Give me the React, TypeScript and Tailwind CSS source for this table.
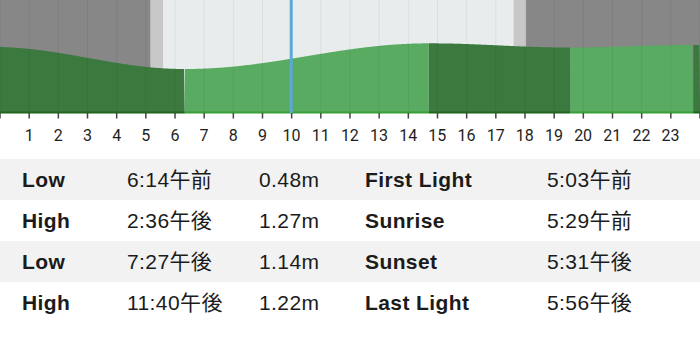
import React from "react";

const PX = 700 / 24;
const OFF = 3;
const BASE = 113;

const extremes: [number, number][] = [
  [-0.4, 1.16],
  [6.233, 0.48],
  [14.6, 1.27],
  [19.45, 1.14],
  [23.667, 1.22],
  [30, 0.5],
];

const xOf = (t: number) => t * PX + OFF;
const yOf = (h: number) => 84.6 - 32.5 * h;

function heightAt(t: number) {
  for (let i = 0; i < extremes.length - 1; i++) {
    const [t0, h0] = extremes[i];
    const [t1, h1] = extremes[i + 1];
    if (t >= t0 && t <= t1) {
      const f = (t - t0) / (t1 - t0);
      const k = (1 - Math.cos(Math.PI * f)) / 2;
      return h0 + (h1 - h0) * k;
    }
  }
  return 1;
}

function areaPath(x0: number, x1: number) {
  const pts: string[] = [];
  for (let x = x0; x <= x1 + 0.001; x += 1) {
    const t = (Math.min(x, x1) - OFF) / PX;
    pts.push(`${Math.min(x, x1).toFixed(2)},${yOf(heightAt(t)).toFixed(2)}`);
  }
  return `M${x0},${BASE} L${pts.join(" L")} L${x1},${BASE} Z`;
}

const DARK = "#3b793f";
const LIGHT = "#5aab62";

const segments: { x0: number; x1: number; c: string; line: string }[] = [
  { x0: 0, x1: xOf(6.233), c: DARK, line: "#1f661f" },
  { x0: xOf(6.233), x1: xOf(14.6), c: LIGHT, line: "#36a036" },
  { x0: xOf(14.6), x1: xOf(19.45), c: DARK, line: "#1f661f" },
  { x0: xOf(19.45), x1: xOf(23.667), c: LIGHT, line: "#36a036" },
  { x0: xOf(23.667), x1: 700, c: DARK, line: "#1f661f" },
];

function Chart() {
  const hours = Array.from({ length: 25 }, (_, i) => i);
  const fl = xOf(5.05);
  const sr = xOf(5.483);
  const ss = xOf(17.517);
  const ll = xOf(17.933);
  return (
    <svg width={700} height={120} viewBox="0 0 700 120" className="block">
      <rect x={0} y={0} width={700} height={BASE} fill="#878787" />
      <rect x={fl} y={0} width={sr - fl} height={BASE} fill="#c8c8c8" />
      <rect x={sr} y={0} width={ss - sr} height={BASE} fill="#e9eced" />
      <rect x={ss} y={0} width={ll - ss} height={BASE} fill="#c8c8c8" />
      {segments.map((s, i) => (
        <path key={i} d={areaPath(s.x0, s.x1)} fill={s.c} />
      ))}
      {hours.map((h) => (
        <line
          key={h}
          x1={h * PX}
          x2={h * PX}
          y1={0}
          y2={BASE}
          stroke="#000"
          strokeOpacity={0.06}
          strokeWidth={1}
        />
      ))}
      {segments.map((s, i) => (
        <rect key={"b" + i} x={s.x0} y={BASE - 1.5} width={s.x1 - s.x0} height={2} fill={s.line} />
      ))}
      <rect x={289.7} y={0} width={3} height={BASE} fill="#5aa9d8" />
      {hours.map((h) => (
        <line
          key={"t" + h}
          x1={h * PX}
          x2={h * PX}
          y1={BASE}
          y2={118.5}
          stroke="#444"
          strokeWidth={1.5}
        />
      ))}
    </svg>
  );
}

const tides = [
  ["Low", "6:14午前", "0.48m", "First Light", "5:03午前"],
  ["High", "2:36午後", "1.27m", "Sunrise", "5:29午前"],
  ["Low", "7:27午後", "1.14m", "Sunset", "5:31午後"],
  ["High", "11:40午後", "1.22m", "Last Light", "5:56午後"],
];

export default function App() {
  const labels = Array.from({ length: 23 }, (_, i) => i + 1);
  return (
    <div className="w-[700px] h-[343px] bg-white overflow-hidden text-[#1b1b1b]">
      <Chart />
      <div
        className="flex h-[31px] items-center pl-[14.58px] text-[16px] text-[#1e1e1e]"
        style={{ fontFamily: "Roboto, 'Noto Sans', sans-serif" }}
      >
        {labels.map((l) => (
          <div key={l} className="w-[29.17px] shrink-0 text-center leading-none">
            {l}
          </div>
        ))}
      </div>
      <div
        className="mt-[8px] flex flex-col text-[21px] tracking-[0.4px]"
        style={{ fontFamily: "'Liberation Sans', 'Noto Sans CJK JP', sans-serif" }}
      >
        {tides.map((r, i) => (
          <div
            key={i}
            className={`flex h-[41px] items-center leading-none ${i % 2 === 0 ? "bg-[#f2f2f2]" : "bg-white"}`}
          >
            <div className="w-[127px] shrink-0 pl-[22px] font-bold">{r[0]}</div>
            <div className="w-[132px] shrink-0">{r[1]}</div>
            <div className="w-[106px] shrink-0">{r[2]}</div>
            <div className="w-[182px] shrink-0 font-bold">{r[3]}</div>
            <div className="shrink-0">{r[4]}</div>
          </div>
        ))}
      </div>
    </div>
  );
}
